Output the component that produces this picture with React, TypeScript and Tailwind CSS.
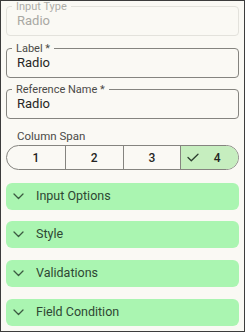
import React from "react";

function Field({ label, value, disabled, className = "" }: { label: string; value: string; disabled?: boolean; className?: string }) {
  return (
    <fieldset
      className={`rounded-[4px] border pl-[10px] pr-[10px] pb-[5px] ${disabled ? "border-[#e3e2dc]" : "border-[#85847f]"} ${className}`}
    >
      <legend
        className={`-ml-[5px] px-[4px] text-[11px] leading-[11px] ${disabled ? "text-[#aeada8]" : "text-[#4a4a47]"}`}
      >
        {label}
      </legend>
      <div className={`text-[13px] leading-[18px] ${disabled ? "text-[#a9a8a3]" : "text-[#262624]"}`}>{value}</div>
    </fieldset>
  );
}

function Chevron() {
  return (
    <svg width="11" height="7" viewBox="0 0 11 7" fill="none">
      <path d="M1 1 L5.5 5.5 L10 1" stroke="#3b5a41" strokeWidth="1.3" strokeLinecap="round" strokeLinejoin="round" />
    </svg>
  );
}

function Accordion({ title, className = "" }: { title: string; className?: string }) {
  return (
    <div className={`flex h-[27px] items-center rounded-[6px] bg-[#aaf5b1] pl-[7px] ${className}`}>
      <Chevron />
      <span className="ml-[12px] text-[12.5px] text-[#2e4733]">{title}</span>
    </div>
  );
}

export default function App() {
  return (
    <div
      className="h-[332px] w-[245px] overflow-hidden border border-[#3c3c3c] bg-[#faf9f4] px-[5px]"
      style={{ fontFamily: "Roboto, 'Noto Sans', sans-serif" }}
    >
      <Field label="Input Type" value="Radio" disabled />
      <Field label="Label *" value="Radio" className="mt-[7px]" />
      <Field label="Reference Name *" value="Radio" className="mt-[6px]" />
      <div className="mt-[11px] pl-[11px] text-[11.5px] leading-[12px] text-[#4a4a47]">Column Span</div>
      <div className="mt-[3px] grid h-[25px] grid-cols-4 overflow-hidden rounded-full border border-[#85847f] text-[12px] font-medium text-[#242422]">
        <div className="flex items-center justify-center">1</div>
        <div className="flex items-center justify-center border-l border-[#85847f]">2</div>
        <div className="flex items-center justify-center border-l border-[#85847f]">3</div>
        <div className="flex items-center justify-center gap-[15px] border-l border-[#85847f] bg-[#c6eebf] pr-[12px]">
          <svg width="12" height="9" viewBox="0 0 12 9" fill="none">
            <path d="M1 4.5 L4.3 7.8 L11 1.2" stroke="#2d3f2f" strokeWidth="1.3" strokeLinecap="round" strokeLinejoin="round" />
          </svg>
          <span>4</span>
        </div>
      </div>
      <Accordion title="Input Options" className="mt-[13px]" />
      <Accordion title="Style" className="mt-[11px]" />
      <Accordion title="Validations" className="mt-[12px]" />
      <Accordion title="Field Condition" className="mt-[12px]" />
    </div>
  );
}
